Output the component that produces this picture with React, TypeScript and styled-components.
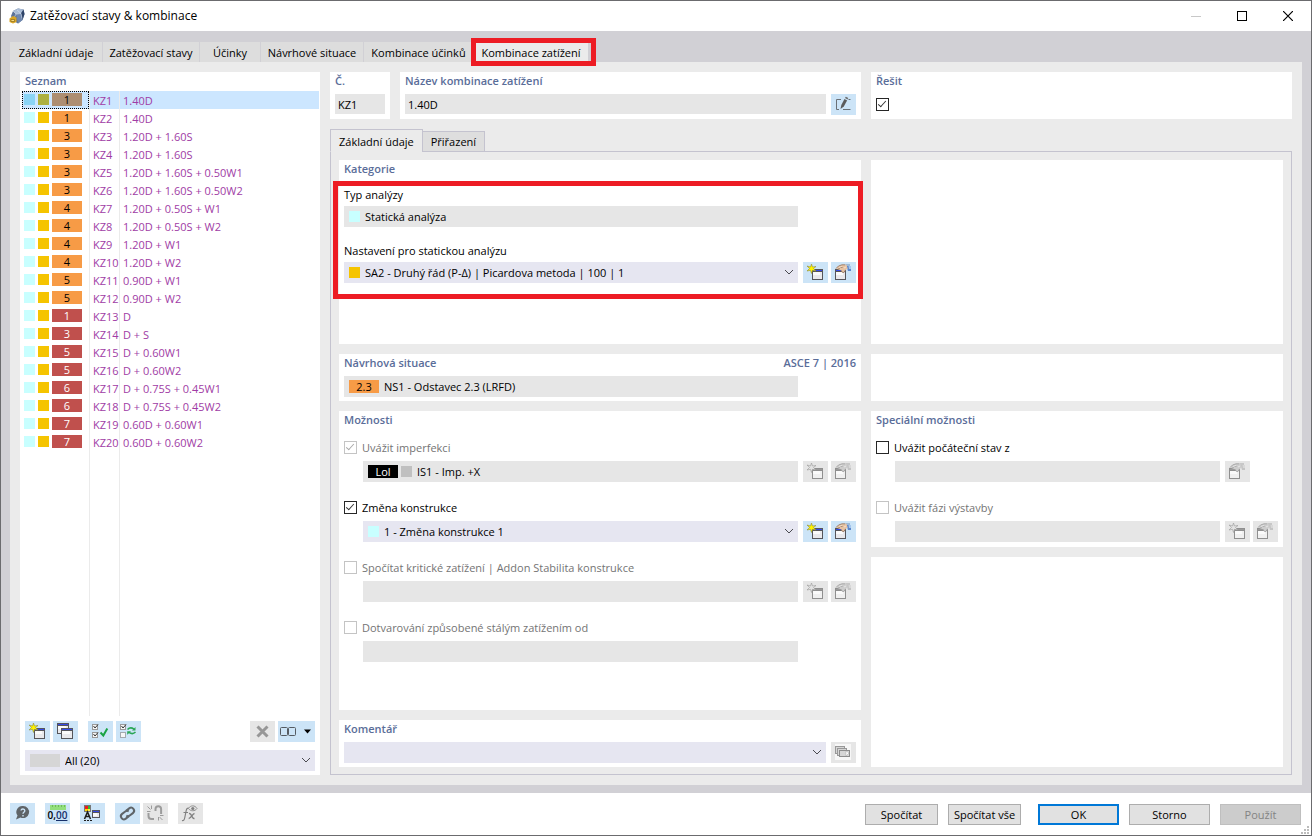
import React from "react";
import styled, { createGlobalStyle, css } from "styled-components";

const GlobalStyle = createGlobalStyle`
  *, *::before, *::after { box-sizing: border-box; }
  body { margin: 0; background: #ffffff; }
  body, button, input, select {
    font-family: "Open Sans", "Noto Sans", sans-serif;
    font-size: 11px;
    line-height: 16px;
    color: #000000;
  }
`;

/* ---------- window frame ---------- */

const Window = styled.div`
  display: flex;
  flex-direction: column;
  min-height: 100vh;
  border: 1px solid #6b6b6e;
  background: #ffffff;
`;

const TitleBar = styled.header`
  display: flex;
  align-items: center;
  gap: 5px;
  height: 30px;
  padding-left: 8px;
`;

const WindowTitle = styled.h1`
  flex: 1;
  margin: 0;
  font-size: 12px;
  font-weight: 400;
`;

const WindowControls = styled.div`
  display: flex;
`;

const WindowControl = styled.button`
  display: flex;
  align-items: center;
  justify-content: center;
  width: 46px;
  height: 30px;
  padding: 0;
  border: 0;
  background: transparent;
`;

const Body = styled.main`
  flex: 1;
  display: flex;
  flex-direction: column;
  padding: 11px 9px 8px;
  background: #d1d0d5;
`;

/* ---------- page tabs ---------- */

const PageTabs = styled.nav`
  display: flex;
  height: 20px;
`;

const PageTab = styled.button<{ $width: number; $active?: boolean }>`
  position: relative;
  width: ${(p) => p.$width}px;
  padding: 2px 0 0;
  border: 0;
  border-right: 1px solid #d1d0d5;
  background: ${(p) => (p.$active ? "#ebebeb" : "#dddddd")};
  white-space: nowrap;
`;

const TabHighlight = styled.span`
  position: absolute;
  inset: -4px -8px -4px -3px;
  border: 5px solid #ed1c24;
  pointer-events: none;
`;

const PageArea = styled.div`
  flex: 1;
  display: grid;
  grid-template-columns: 300px minmax(0, 1fr);
  gap: 10px;
  padding: 10px;
  background: #ebebeb;
`;

/* ---------- cards ---------- */

const Card = styled.section<{ $minHeight?: number; $grow?: boolean }>`
  position: relative;
  min-width: 0;
  min-height: ${(p) => p.$minHeight ?? 47}px;
  flex: ${(p) => (p.$grow ? "1 0 auto" : "none")};
  padding: 0 5px 4px;
  background: #ffffff;
`;

const CardTitle = styled.h2`
  display: flex;
  justify-content: space-between;
  margin: 0;
  height: 22px;
  font-size: 11px;
  font-weight: 600;
  line-height: 18px;
  color: #5a6d99;
`;

/* ---------- combination list ---------- */

const ListCard = styled.section`
  display: flex;
  flex-direction: column;
  padding: 0 1px 4px 2px;
  background: #ffffff;
`;

const ListTitle = styled.h2`
  margin: 0;
  padding-left: 3px;
  height: 19px;
  font-size: 11px;
  font-weight: 600;
  line-height: 18px;
  color: #5a6d99;
`;

const ListArea = styled.div`
  flex: 1;
  background:
    linear-gradient(#ebebeb, #ebebeb) 67px 0 / 1px 100% no-repeat,
    linear-gradient(#ebebeb, #ebebeb) 97px 0 / 1px 100% no-repeat;
`;

const ListTable = styled.table`
  width: 100%;
  table-layout: fixed;
  border-spacing: 0;
  color: #a03ca5;
`;

const SwatchColumn = styled.col`
  width: 68px;
`;

const NumberColumn = styled.col`
  width: 30px;
`;

const ListRow = styled.tr<{ $selected?: boolean }>`
  height: 18px;
  background: ${(p) => (p.$selected ? "#cce6ff" : "transparent")};
`;

const ListCell = styled.td`
  padding: 1px 0 0 3px;
  white-space: nowrap;
  &:not(:last-child) { border-right: 1px solid #ebebeb; }
`;

const SwatchCell = styled.td<{ $selected?: boolean }>`
  padding: 0;
  border-right: 1px solid #ebebeb;
  & > div {
    display: flex;
    align-items: center;
    gap: 3px;
    height: 18px;
    padding: 0 0 2px 2px;
    outline: ${(p) => (p.$selected ? "1px dotted #000000" : "none")};
    outline-offset: -1px;
  }
`;

const Swatch = styled.span<{ $color: string }>`
  flex: none;
  width: 11px;
  height: 11px;
  background: ${(p) => p.$color};
`;

const Badge = styled.span<{ $color: string; $light?: boolean }>`
  flex: none;
  width: 30px;
  height: 13px;
  line-height: 13px;
  text-align: center;
  color: ${(p) => (p.$light ? "#ffffff" : "#000000")};
  background: ${(p) => p.$color};
`;

const Toolbar = styled.div`
  display: flex;
  gap: 3px;
  padding: 5px 4px 8px 3px;
`;

const Spacer = styled.span<{ $width?: number }>`
  flex: ${(p) => (p.$width === undefined ? "1" : `0 0 ${p.$width}px`)};
`;

const FilterSlot = styled.div`
  padding: 0 4px 0 3px;
`;

/* ---------- controls ---------- */

const IconButton = styled.button<{ $width?: number }>`
  flex: none;
  width: ${(p) => p.$width ?? 25}px;
  height: 21px;
  padding: 0;
  border: 0;
  background: #cce4f7;
  & > svg { display: block; }
  &:disabled { background: #e6e6e6; }
`;

const ButtonSlot = styled.div`
  display: flex;
  gap: 3px;
`;

const FieldRow = styled.div<{ $slots?: number; $indent?: boolean }>`
  display: grid;
  grid-template-columns: minmax(0, 1fr) ${(p) => (p.$slots === 1 ? 25 : 53)}px;
  gap: 5px;
  margin-left: ${(p) => (p.$indent ? 19 : 0)}px;
`;

const FieldBox = styled.div<{ $editable?: boolean }>`
  position: relative;
  display: flex;
  align-items: center;
  gap: 5px;
  height: 21px;
  padding-left: 5px;
  background: ${(p) => (p.$editable ? "#e6e6f1" : "#e6e6e6")};
`;

const SwatchPair = styled.span`
  display: flex;
  align-items: center;
  gap: 3px;
`;

const bareControl = css`
  flex: 1;
  min-width: 0;
  width: 100%;
  height: 21px;
  padding: 0;
  border: 0;
  border-radius: 0;
  background: transparent;
  outline: none;
  appearance: none;
  opacity: 1;
  color: #000000;
`;

const TextInput = styled.input`
  ${bareControl}
`;

const PlainInput = styled.input`
  ${bareControl}
  height: 20px;
  padding-left: 3px;
  background: #e6e6e6;
`;

const Select = styled.select`
  ${bareControl}
  padding-right: 20px;
`;

const ChevronSlot = styled.span`
  position: absolute;
  right: 4px;
  top: 7px;
  line-height: 0;
  pointer-events: none;
`;

const FieldLabel = styled.label`
  display: block;
  height: 19px;
  line-height: 16px;
`;

const LabelledField = styled.div`
  margin-top: 16px;
  &:first-of-type { margin-top: 5px; }
`;

const Highlight = styled.div`
  position: absolute;
  top: 21px;
  left: -6px;
  right: -2px;
  height: 118px;
  border: 5px solid #ed1c24;
  pointer-events: none;
`;

const OptionBlock = styled.div`
  display: flex;
  flex-direction: column;
  gap: 7px;
  margin-bottom: 19px;
  &:first-of-type { margin-top: 8px; }
  &:last-child { margin-bottom: 1px; }
`;

const CheckLabel = styled.label<{ $disabled?: boolean }>`
  display: flex;
  align-items: center;
  gap: 5px;
  height: 13px;
  color: ${(p) => (p.$disabled ? "#747474" : "#000000")};
`;

const CheckBox = styled.input`
  flex: none;
  appearance: none;
  width: 13px;
  height: 13px;
  margin: 0;
  border: 1px solid #262626;
  background: #ffffff;
  position: relative;
  &:checked::after {
    content: "";
    position: absolute;
    left: 3px;
    top: 0;
    width: 4px;
    height: 8px;
    border: solid #333333;
    border-width: 0 1px 1px 0;
    transform: rotate(42deg);
  }
  &:disabled { border-color: #c4c4c4; }
  &:disabled::after { border-color: #a8a8a8; }
`;

const CheckSlot = styled.div`
  display: flex;
  padding-top: 4px;
`;

/* ---------- right-hand side ---------- */

const Detail = styled.div`
  display: flex;
  flex-direction: column;
  min-width: 0;
`;

const HeaderRow = styled.div`
  display: grid;
  grid-template-columns: minmax(0, 531fr) minmax(0, 421fr);
  gap: 10px;
  margin-bottom: 10px;
`;

const HeaderLeft = styled.div`
  display: grid;
  grid-template-columns: 60px minmax(0, 1fr);
  gap: 10px;
`;

const SubTabs = styled.nav`
  display: flex;
  align-items: flex-end;
  height: 23px;
  margin-bottom: -1px;
`;

const SubTab = styled.button<{ $active?: boolean }>`
  position: relative;
  height: ${(p) => (p.$active ? 23 : 21)}px;
  margin-right: -1px;
  padding: ${(p) => (p.$active ? 2 : 0)}px 8px 0;
  border: 1px solid #c4c3cf;
  border-bottom-color: ${(p) => (p.$active ? "#ebebeb" : "#c4c3cf")};
  background: ${(p) => (p.$active ? "#ebebeb" : "#dedede")};
  white-space: nowrap;
`;

const SubPage = styled.div`
  flex: 1;
  display: grid;
  grid-template-columns: minmax(0, 522fr) minmax(0, 412fr);
  gap: 10px;
  padding: 8px 8px 7px;
  border: 1px solid #c4c3cf;
`;

const Column = styled.div`
  display: flex;
  flex-direction: column;
  gap: 10px;
  min-width: 0;
`;

/* ---------- footer ---------- */

const Footer = styled.footer`
  position: relative;
  display: flex;
  align-items: flex-start;
  justify-content: space-between;
  height: 42px;
  padding: 10px 10px 0 9px;
`;

const FooterGroup = styled.div<{ $gap: number }>`
  display: flex;
  gap: ${(p) => p.$gap}px;
`;

const DialogButton = styled.button<{ $narrow?: boolean; $primary?: boolean }>`
  width: ${(p) => (p.$narrow ? 73 : 81)}px;
  height: 21px;
  margin-top: 1px;
  padding: 0;
  border: ${(p) => (p.$primary ? "2px solid #0078d7" : "1px solid #adadad")};
  background: #e1e1e1;
  line-height: 16px;
  white-space: nowrap;
  &:disabled { color: #838383; background: #cccccc; border-color: #bfbfbf; }
`;

const Grip = styled.span`
  position: absolute;
  right: 2px;
  bottom: 1px;
  line-height: 0;
`;

/* ---------- icons ---------- */

const Icon = ({ width = 25, children }: { width?: number; children: React.ReactNode }) => (
  <svg width={width} height={21} viewBox={`0 0 ${width} 21`} fill="none" aria-hidden="true">
    {children}
  </svg>
);

const MiniWindow = ({ x, y, w = 11, h = 11, muted }: { x: number; y: number; w?: number; h?: number; muted?: boolean }) => (
  <g shapeRendering="crispEdges">
    <rect x={x} y={y} width={w} height={h} fill={muted ? "#8f8f8f" : "#55555a"} />
    <rect x={x + 1} y={y + 1} width={w - 2} height={h - 2} fill={muted ? "#f0f0f0" : "#e9e9ec"} />
    <rect x={x + 1} y={y + 1} width={w - 2} height={1} fill={muted ? "#9a9a9a" : "#3549e6"} />
    <rect x={x + 1} y={y + 2} width={w - 2} height={1} fill={muted ? "#8f8f8f" : "#55555a"} />
    <rect x={x + 1} y={y + 3} width={w - 4} height={3} fill="#fafafa" />
  </g>
);

const Star = ({ muted }: { muted?: boolean }) => (
  <path
    d="M8.500 2 L9.500 5 L13 4.500 L10.500 6.500 L13 9 L9.500 8.300 L8.500 11.500 L7.500 8.300 L4 9 L6.500 6.500 L4 4 L7.500 5 Z"
    fill={muted ? "#e3e3e3" : "#fff200"}
    stroke={muted ? "#9b9b9b" : "#8d8d3c"}
    strokeWidth=".6"
  />
);

const NewIcon = ({ muted }: { muted?: boolean }) => (
  <Icon>
    <MiniWindow x={9} y={7} muted={muted} />
    <Star muted={muted} />
  </Icon>
);

const EditIcon = ({ muted }: { muted?: boolean }) => (
  <Icon>
    <MiniWindow x={4} y={7} muted={muted} />
    <path d="M14 2.500h5v1h-4z" fill={muted ? "#a8a8a8" : "#6f8fb8"} />
    <path d="M15.500 4H20v5h-3z" fill={muted ? "#c4c4c4" : "#5b86cc"} />
    <path d="M17.500 4H20v3h-2z" fill={muted ? "#d8d8d8" : "#a4c6ee"} />
    <path
      d="M5 6.500 7.500 4l3.500-1.200h4.500l1.200 3.700-2.200 1.500-1.500 2.500-1.800-.2L10 8.300 7.500 7.500z"
      fill={muted ? "#cdcdcd" : "#e6c3a4"}
    />
    <path
      d="M5 6.500 7.500 4l3.500-1.200h3M7 7.300l2.500-1.800h2M10 8.300l1.200 2 1.800.2 1.500-2.500"
      stroke={muted ? "#9d9d9d" : "#8f7059"}
      strokeWidth=".8"
    />
    <path d="M8 5.500l3-1M13 6l2-1" stroke={muted ? "#ececec" : "#f8e6d4"} strokeWidth=".8" />
  </Icon>
);

const CopyIcon = () => (
  <Icon>
    <MiniWindow x={4} y={2} w={12} h={11} />
    <MiniWindow x={8} y={7} w={12} h={11} />
  </Icon>
);

const TinyCheck = ({ y, empty }: { y: number; empty?: boolean }) => (
  <g>
    <rect x="4.500" y={y + 0.5} width="5" height="5" fill="#f6f6f6" stroke={empty ? "#a3a9ae" : "#9a9a9a"} />
    {!empty && <path d={`M5.500 ${y + 2}l1.500 2 3-3.500`} stroke="#333" />}
  </g>
);

const CheckAllIcon = () => (
  <Icon>
    <TinyCheck y={3} />
    <TinyCheck y={11} />
    <path d="M12.500 11.500l2.800 3 4-7" stroke="#1ba345" strokeWidth="2" />
  </Icon>
);

const InvertIcon = () => (
  <Icon>
    <TinyCheck y={3} />
    <TinyCheck y={11} empty />
    <path d="M11.500 8.500c2-2 4.500-1.800 6.500-.3M19.500 11c-2 2-4.500 1.800-6.500.3" stroke="#2aa655" strokeWidth="1.600" />
    <path d="M16 9.500h3.500V6zM15 10.200h-3.800v3.600z" fill="#2aa655" />
  </Icon>
);

const DeleteIcon = () => (
  <Icon>
    <path d="M7.500 5.500l10 10M17.500 5.500l-10 10" stroke="#979797" strokeWidth="3" />
  </Icon>
);

const ViewIcon = () => (
  <Icon width={37}>
    <rect x="2.500" y="6.500" width="7" height="8" rx="1" stroke="#555b62" />
    <rect x="10.500" y="6.500" width="7" height="8" rx="1" stroke="#555b62" />
    <path d="M26 8.500h7l-3.500 4z" fill="#000" />
  </Icon>
);

const RenameIcon = () => (
  <Icon>
    <path d="M10 5.500H5.500v10h2.500M12 15.500h7.500M17.500 5.500h2" stroke="#6a7076" />
    <path d="M9.500 15l.8-4 3.200-6 2.600 1.400-3.300 6z" fill="#5b5b5b" />
    <path d="M14 4l.8-1.300 2.500 1.400-.8 1.300z" fill="#6b6b6b" />
  </Icon>
);

const LibraryIcon = () => (
  <Icon>
    <rect x="4" y="2" width="16" height="16" fill="#f7f7f7" />
    <rect x="4.500" y="4.500" width="9" height="7" fill="#d6d6d6" stroke="#999" />
    <rect x="6.500" y="6.500" width="9" height="7" fill="#d6d6d6" stroke="#999" />
    <rect x="8.500" y="8.500" width="10" height="6" fill="#d6d6d6" stroke="#8d8d8d" />
    <path d="M15 9l3 2-3 3z" fill="#fff" stroke="#aaa" strokeWidth=".5" />
  </Icon>
);

const HelpIcon = () => (
  <Icon>
    <path d="M13 3a6 6 0 1 1-2.500 11.400L6 16.500l1.500-4A6 6 0 0 1 13 3z" fill="#5f6468" />
    <path d="M11 7.500c.3-2 3.800-2 3.800.2 0 1.600-1.800 1.500-1.800 3M13 12v1.500" stroke="#cce4f7" strokeWidth="1.400" />
  </Icon>
);

const DecimalsButton = styled(IconButton)`
  display: flex;
  flex-direction: column;
  align-items: center;
  font-size: 10px;
  font-weight: 600;
  line-height: 11px;
  & > svg { flex: none; margin-top: 2px; }
  u { text-underline-offset: 1px; color: #16306a; }
`;

const RulerIcon = () => (
  <svg width="16" height="5" viewBox="0 0 16 5" aria-hidden="true" shapeRendering="crispEdges">
    <rect width="16" height="5" fill="#92df7c" />
    <path d="M2 0h1v2H2zM5 0h1v2H5zM8 0h1v2H8zM11 0h1v2h-1zM14 0h1v2h-1z" fill="#6fb95c" />
  </svg>
);

const DisplayIcon = () => (
  <Icon>
    <g shapeRendering="crispEdges">
      <rect x="4" y="2" width="7" height="7" fill="#777" />
      <rect x="5" y="3" width="3" height="3" fill="#ef1c1c" />
      <rect x="8" y="3" width="2" height="3" fill="#33b733" />
      <rect x="5" y="6" width="3" height="2" fill="#ffd800" />
      <rect x="8" y="6" width="2" height="2" fill="#ffe94a" />
    </g>
    <path d="M4.500 16l3-7 3 7M5.500 13.500h4" stroke="#1d1d1d" strokeWidth="1.500" />
    <path d="M4 17.500h9" stroke="#1d1d1d" strokeDasharray="2 1" />
    <MiniWindow x={12} y={7} w={8} h={8} />
  </Icon>
);

const LinkIcon = ({ broken }: { broken?: boolean }) =>
  broken ? (
    <Icon>
      <path d="M12.500 8V6a2.800 2.800 0 0 1 5.600 0v5M5.500 10v3a3 3 0 0 0 3 3H11" stroke="#9c9c9c" strokeWidth="2" />
      <path d="M8.500 2.500v3.500M4.500 3.500l3 3M4 8.500h3.500M15.500 17.500V14M19.500 17l-3-3M20.500 12.500H17" stroke="#9c9c9c" />
    </Icon>
  ) : (
    <Icon>
      <g transform="rotate(-38 12.500 10.500)" stroke="#5f6468" strokeWidth="2">
        <path d="M13 7.500h4a3 3 0 0 1 0 6h-4a3 3 0 0 1-2.800-2" />
        <path d="M12 13.500H8a3 3 0 0 1 0-6h4a3 3 0 0 1 2.800 2" />
      </g>
    </Icon>
  );

const FormulaIcon = () => (
  <Icon>
    <path d="M4 17.500c1.500.5 2.300-.5 2.800-3l1.400-7c.4-2 1.300-2.700 2.600-2.200M5.500 9.500h4.500" stroke="#808080" strokeWidth="1.200" />
    <path d="M11 10.500c3-.8 2.500 5.500 5.500 5M16.500 10.500c-2 0-3.500 5-5.800 5" stroke="#808080" strokeWidth="1.400" />
    <path d="M10.500 5.500c2-3.500 6.500-3.500 8.500 0-2 3-6.500 3-8.500 0z" stroke="#909090" />
    <circle cx="14.800" cy="5.500" r="1.600" fill="#808080" />
  </Icon>
);

const AppIcon = () => (
  <svg width="16" height="16" viewBox="0 0 16 16" aria-hidden="true">
    <path d="M4 3 9 .5l5.500 1 1 4.500-2 6L9 15.500 4.500 13 2 8z" fill="#5c7399" />
    <path d="M4 3 9 .5l5.500 1-2.500 4-5 .500z" fill="#a9bcd6" />
    <path d="M12 5.500l2.500-4 1 4.500-2 6z" fill="#2f4468" />
    <path d="M7 6l5-.5 1.500 6.500L9 15.500z" fill="#6f87ae" />
    <path d="M4 3l3 3-2 4M7 6l5-.5M8 2l4 3.500 1 5" stroke="#dce6f2" strokeWidth=".6" fill="none" />
    <path d="M.5 10.500 4 8l3.500 1.500V14L4 15.500.5 14z" fill="#d9a625" />
    <path d="M2 11.500h3.500v2H2z" fill="#f8dc7c" stroke="#7c5a10" strokeWidth=".6" />
  </svg>
);

const Chevron = () => (
  <ChevronSlot>
    <svg width="10" height="7" viewBox="0 0 10 7" fill="none" aria-hidden="true">
      <path d="M1 1l4 4 4-4" stroke="#4a4a50" />
    </svg>
  </ChevronSlot>
);

/* ---------- data ---------- */

const CYAN = "#c8ffff";
const YELLOW = "#f5c400";
const ORANGE = "#f79b46";
const RED = "#c0504d";

const combinations: { group: number; name: string; service?: boolean }[] = [
  { group: 1, name: "1.40D" },
  { group: 1, name: "1.40D" },
  { group: 3, name: "1.20D + 1.60S" },
  { group: 3, name: "1.20D + 1.60S" },
  { group: 3, name: "1.20D + 1.60S + 0.50W1" },
  { group: 3, name: "1.20D + 1.60S + 0.50W2" },
  { group: 4, name: "1.20D + 0.50S + W1" },
  { group: 4, name: "1.20D + 0.50S + W2" },
  { group: 4, name: "1.20D + W1" },
  { group: 4, name: "1.20D + W2" },
  { group: 5, name: "0.90D + W1" },
  { group: 5, name: "0.90D + W2" },
  { group: 1, name: "D", service: true },
  { group: 3, name: "D + S", service: true },
  { group: 5, name: "D + 0.60W1", service: true },
  { group: 5, name: "D + 0.60W2", service: true },
  { group: 6, name: "D + 0.75S + 0.45W1", service: true },
  { group: 6, name: "D + 0.75S + 0.45W2", service: true },
  { group: 7, name: "0.60D + 0.60W1", service: true },
  { group: 7, name: "0.60D + 0.60W2", service: true },
];

const pageTabs = [
  { title: "Základní údaje", width: 93 },
  { title: "Zatěžovací stavy", width: 97 },
  { title: "Účinky", width: 61 },
  { title: "Návrhové situace", width: 103 },
  { title: "Kombinace účinků", width: 110 },
  { title: "Kombinace zatížení", width: 115 },
];

/* ---------- composed parts ---------- */

const NewEditButtons = ({ disabled }: { disabled?: boolean }) => (
  <ButtonSlot>
    <IconButton disabled={disabled} aria-label="Nový"><NewIcon muted={disabled} /></IconButton>
    <IconButton disabled={disabled} aria-label="Upravit"><EditIcon muted={disabled} /></IconButton>
  </ButtonSlot>
);

const Combo = ({ id, value, label, children }: { id?: string; value: string; label?: string; children?: React.ReactNode }) => (
  <FieldBox $editable>
    {children}
    <Select id={id} aria-label={label} defaultValue={value}>
      <option value={value}>{value}</option>
    </Select>
    <Chevron />
  </FieldBox>
);

const CombinationList = () => {
  const [selected, setSelected] = React.useState(0);
  return (
    <ListTable>
      <colgroup>
        <SwatchColumn />
        <NumberColumn />
        <col />
      </colgroup>
      <tbody>
        {combinations.map((c, i) => {
          const on = i === selected;
          return (
            <ListRow key={i} $selected={on} onClick={() => setSelected(i)}>
              <SwatchCell $selected={on}>
                <div>
                  <Swatch $color={on ? "#8ad4f5" : CYAN} />
                  <Swatch $color={on ? "#adb03f" : YELLOW} />
                  <Badge $color={on ? "#ad8e72" : c.service ? RED : ORANGE} $light={c.service}>
                    {c.group}
                  </Badge>
                </div>
              </SwatchCell>
              <ListCell>KZ{i + 1}</ListCell>
              <ListCell>{c.name}</ListCell>
            </ListRow>
          );
        })}
      </tbody>
    </ListTable>
  );
};

export default function App() {
  return (
    <>
      <GlobalStyle />
      <Window>
        <TitleBar>
          <AppIcon />
          <WindowTitle>Zatěžovací stavy &amp; kombinace</WindowTitle>
          <WindowControls>
            <WindowControl aria-label="Minimalizovat" disabled>
              <svg width="10" height="10"><path d="M0 5.500h10" stroke="#c8c8c8" /></svg>
            </WindowControl>
            <WindowControl aria-label="Maximalizovat">
              <svg width="10" height="10"><rect x=".5" y=".5" width="9" height="9" fill="none" stroke="#000" /></svg>
            </WindowControl>
            <WindowControl aria-label="Zavřít">
              <svg width="10" height="10"><path d="M0 0l10 10M10 0L0 10" stroke="#000" strokeWidth="1.200" /></svg>
            </WindowControl>
          </WindowControls>
        </TitleBar>

        <Body>
          <PageTabs>
            {pageTabs.map((t, i) => {
              const active = i === pageTabs.length - 1;
              return (
                <PageTab key={t.title} $width={t.width} $active={active}>
                  {t.title}
                  {active && <TabHighlight />}
                </PageTab>
              );
            })}
          </PageTabs>

          <PageArea>
            <ListCard>
              <ListTitle>Seznam</ListTitle>
              <ListArea>
                <CombinationList />
              </ListArea>
              <Toolbar>
                <IconButton aria-label="Nový"><NewIcon /></IconButton>
                <IconButton aria-label="Kopírovat"><CopyIcon /></IconButton>
                <Spacer $width={4} />
                <IconButton aria-label="Vybrat vše"><CheckAllIcon /></IconButton>
                <IconButton aria-label="Invertovat výběr"><InvertIcon /></IconButton>
                <Spacer />
                <IconButton aria-label="Smazat" disabled><DeleteIcon /></IconButton>
                <IconButton aria-label="Zobrazení" $width={37}><ViewIcon /></IconButton>
              </Toolbar>
              <FilterSlot>
                <Combo label="Filtr" value="All (20)">
                  <Badge $color="#d6d6d6" />
                </Combo>
              </FilterSlot>
            </ListCard>

            <Detail>
              <HeaderRow>
                <HeaderLeft>
                  <Card>
                    <CardTitle><label htmlFor="no">Č.</label></CardTitle>
                    <PlainInput id="no" readOnly defaultValue="KZ1" />
                  </Card>
                  <Card>
                    <CardTitle><label htmlFor="name">Název kombinace zatížení</label></CardTitle>
                    <FieldRow $slots={1}>
                      <PlainInput id="name" readOnly defaultValue="1.40D" />
                      <IconButton aria-label="Upravit název"><RenameIcon /></IconButton>
                    </FieldRow>
                  </Card>
                </HeaderLeft>
                <Card>
                  <CardTitle><label htmlFor="solve">Řešit</label></CardTitle>
                  <CheckSlot>
                    <CheckBox id="solve" type="checkbox" defaultChecked />
                  </CheckSlot>
                </Card>
              </HeaderRow>

              <SubTabs>
                <SubTab $active>Základní údaje</SubTab>
                <SubTab>Přiřazení</SubTab>
              </SubTabs>

              <SubPage>
                <Column>
                  <Card $minHeight={184}>
                    <CardTitle>Kategorie</CardTitle>
                    <LabelledField>
                      <FieldLabel htmlFor="type">Typ analýzy</FieldLabel>
                      <FieldRow>
                        <FieldBox>
                          <Swatch $color={CYAN} />
                          <TextInput id="type" readOnly defaultValue="Statická analýza" />
                        </FieldBox>
                      </FieldRow>
                    </LabelledField>
                    <LabelledField>
                      <FieldLabel htmlFor="settings">Nastavení pro statickou analýzu</FieldLabel>
                      <FieldRow>
                        <Combo id="settings" value="SA2 - Druhý řád (P-Δ) | Picardova metoda | 100 | 1">
                          <Swatch $color={YELLOW} />
                        </Combo>
                        <NewEditButtons />
                      </FieldRow>
                    </LabelledField>
                    <Highlight />
                  </Card>

                  <Card>
                    <CardTitle>
                      <label htmlFor="situation">Návrhová situace</label>
                      <span>ASCE 7 | 2016</span>
                    </CardTitle>
                    <FieldRow>
                      <FieldBox>
                        <Badge $color={ORANGE}>2.3</Badge>
                        <TextInput id="situation" readOnly defaultValue="NS1 - Odstavec 2.3 (LRFD)" />
                      </FieldBox>
                    </FieldRow>
                  </Card>

                  <Card $grow>
                    <CardTitle>Možnosti</CardTitle>
                    <OptionBlock>
                      <CheckLabel $disabled>
                        <CheckBox type="checkbox" defaultChecked disabled />
                        Uvážit imperfekci
                      </CheckLabel>
                      <FieldRow $indent>
                        <FieldBox>
                          <SwatchPair>
                            <Badge $color="#000000" $light>Lol</Badge>
                            <Swatch $color="#c0c0c0" />
                          </SwatchPair>
                          <TextInput aria-label="Imperfekce" readOnly defaultValue="IS1 - Imp. +X" />
                        </FieldBox>
                        <NewEditButtons disabled />
                      </FieldRow>
                    </OptionBlock>
                    <OptionBlock>
                      <CheckLabel>
                        <CheckBox type="checkbox" defaultChecked />
                        Změna konstrukce
                      </CheckLabel>
                      <FieldRow $indent>
                        <Combo label="Změna konstrukce" value="1 - Změna konstrukce 1">
                          <Swatch $color={CYAN} />
                        </Combo>
                        <NewEditButtons />
                      </FieldRow>
                    </OptionBlock>
                    <OptionBlock>
                      <CheckLabel $disabled>
                        <CheckBox type="checkbox" disabled />
                        Spočítat kritické zatížení | Addon Stabilita konstrukce
                      </CheckLabel>
                      <FieldRow $indent>
                        <FieldBox><TextInput aria-label="Kritické zatížení" disabled /></FieldBox>
                        <NewEditButtons disabled />
                      </FieldRow>
                    </OptionBlock>
                    <OptionBlock>
                      <CheckLabel $disabled>
                        <CheckBox type="checkbox" disabled />
                        Dotvarování způsobené stálým zatížením od
                      </CheckLabel>
                      <FieldRow $indent>
                        <FieldBox><TextInput aria-label="Dotvarování" disabled /></FieldBox>
                      </FieldRow>
                    </OptionBlock>
                  </Card>

                  <Card>
                    <CardTitle><label htmlFor="comment">Komentář</label></CardTitle>
                    <FieldRow $slots={1}>
                      <Combo id="comment" value="" />
                      <IconButton aria-label="Knihovna komentářů" disabled><LibraryIcon /></IconButton>
                    </FieldRow>
                  </Card>
                </Column>

                <Column>
                  <Card $minHeight={184} />
                  <Card />
                  <Card>
                    <CardTitle>Speciální možnosti</CardTitle>
                    <OptionBlock>
                      <CheckLabel>
                        <CheckBox type="checkbox" />
                        Uvážit počáteční stav z
                      </CheckLabel>
                      <FieldRow $indent>
                        <FieldBox><TextInput aria-label="Počáteční stav" disabled /></FieldBox>
                        <ButtonSlot>
                          <IconButton disabled aria-label="Upravit"><EditIcon muted /></IconButton>
                        </ButtonSlot>
                      </FieldRow>
                    </OptionBlock>
                    <OptionBlock>
                      <CheckLabel $disabled>
                        <CheckBox type="checkbox" disabled />
                        Uvážit fázi výstavby
                      </CheckLabel>
                      <FieldRow $indent>
                        <FieldBox><TextInput aria-label="Fáze výstavby" disabled /></FieldBox>
                        <NewEditButtons disabled />
                      </FieldRow>
                    </OptionBlock>
                  </Card>
                  <Card $grow />
                </Column>
              </SubPage>
            </Detail>
          </PageArea>
        </Body>

        <Footer>
          <FooterGroup $gap={10}>
            <IconButton aria-label="Nápověda"><HelpIcon /></IconButton>
            <DecimalsButton aria-label="Jednotky a desetinná místa">
              <RulerIcon />
              <span>0,<u>00</u></span>
            </DecimalsButton>
            <IconButton aria-label="Zobrazení"><DisplayIcon /></IconButton>
            <FooterGroup $gap={3}>
              <IconButton aria-label="Propojit"><LinkIcon /></IconButton>
              <IconButton aria-label="Zrušit propojení" disabled><LinkIcon broken /></IconButton>
            </FooterGroup>
            <IconButton aria-label="Vzorec" disabled><FormulaIcon /></IconButton>
          </FooterGroup>
          <FooterGroup $gap={17}>
            <FooterGroup $gap={10}>
              <DialogButton $narrow>Spočítat</DialogButton>
              <DialogButton $narrow>Spočítat vše</DialogButton>
            </FooterGroup>
            <FooterGroup $gap={10}>
              <DialogButton $primary>OK</DialogButton>
              <DialogButton>Storno</DialogButton>
              <DialogButton disabled>Použít</DialogButton>
            </FooterGroup>
          </FooterGroup>
          <Grip>
            <svg width="8" height="8" aria-hidden="true">
              <path d="M6 0h2v2H6zM3 3h2v2H3zM6 3h2v2H6zM0 6h2v2H0zM3 6h2v2H3zM6 6h2v2H6z" fill="#bcbcbc" />
            </svg>
          </Grip>
        </Footer>
      </Window>
    </>
  );
}
